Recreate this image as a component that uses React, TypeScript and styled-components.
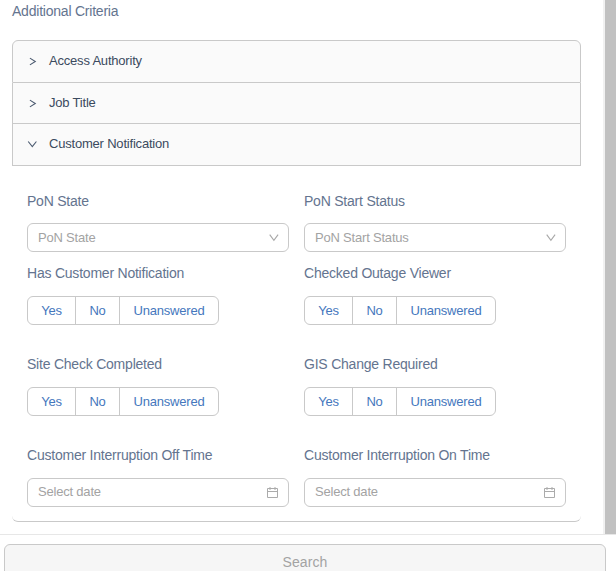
import React from "react";
import styled, { createGlobalStyle } from "styled-components";

const GlobalStyle = createGlobalStyle`
  *, *::before, *::after { box-sizing: border-box; }
  html, body { margin: 0; overflow: hidden; background: #fff; }
  body { font-family: "Liberation Sans", Arial, sans-serif; font-size: 13px; letter-spacing: -0.2px; color: #3b4a5e; }
  button { font-family: inherit; letter-spacing: inherit; }
`;

const Page = styled.div`
  display: flex;
  flex-direction: column;
  width: 616px;
  height: 571px;
  overflow: hidden;
`;

const ScrollRegion = styled.div`
  display: flex;
  height: 534px;
`;

const Content = styled.main`
  width: 603px;
  padding: 1px 22px 0 12px;
`;

const ScrollTrack = styled.div`
  width: 13px;
  padding-left: 2px;
  background: #f1f1f1;
`;

const ScrollThumb = styled.div`
  height: 100%;
  background: #c1c1c1;
`;

const Title = styled.h1`
  margin: 0 0 19px;
  font-size: 14px;
  font-weight: 400;
  line-height: 20px;
  letter-spacing: -0.22px;
  color: #64748f;
`;

const Accordion = styled.div`
  border-radius: 6px;
`;

const SectionHeader = styled.button<{ $height: number; $first?: boolean }>`
  display: flex;
  align-items: center;
  width: 100%;
  height: ${(p) => p.$height}px;
  padding: 0 0 1px 14px;
  gap: 12px;
  border: 1px solid #c9c9c9;
  border-top-width: ${(p) => (p.$first ? 1 : 0)}px;
  border-radius: ${(p) => (p.$first ? "6px 6px 0 0" : "0")};
  background: #fafafa;
  color: #3b4a5e;
  font-size: 13px;
  line-height: 20px;
  text-align: left;
`;

const SectionBody = styled.div`
  height: 350px;
  padding: 25px 15px 0;
`;

const FieldGrid = styled.div`
  display: grid;
  grid-template-columns: 262px 262px;
  grid-template-rows: 72px 91px 91px 77px;
  column-gap: 15px;
`;

const PanelEdge = styled.div`
  height: 6px;
  border-bottom: 1px solid #c9c9c9;
  border-radius: 0 0 6px 6px;
`;

const Label = styled.div<{ $tight?: boolean }>`
  height: 20px;
  margin-bottom: ${(p) => (p.$tight ? 12 : 13)}px;
  font-size: 14px;
  line-height: 20px;
  letter-spacing: -0.22px;
  color: #64748f;
`;

const InputBox = styled.div<{ $date?: boolean }>`
  display: flex;
  align-items: center;
  justify-content: space-between;
  height: 29px;
  padding: 0 ${(p) => (p.$date ? 9 : 8)}px 0 10px;
  border: 1px solid #c9c9c9;
  border-radius: 6px;
  color: #a3a3a3;
`;

const Placeholder = styled.span<{ $date?: boolean }>`
  padding-bottom: ${(p) => (p.$date ? 2 : 0)}px;
`;

const ToggleGroup = styled.div`
  display: flex;
  width: 192px;
  height: 29px;
  border: 1px solid #c9c9c9;
  border-radius: 6px;
`;

const Toggle = styled.button<{ $width: number }>`
  width: ${(p) => p.$width}px;
  padding: 0;
  border: 0;
  border-right: 1px solid #c9c9c9;
  background: transparent;
  color: #4577bd;
  font-size: 13px;
  white-space: nowrap;

  &:last-child { border-right: 0; }
`;

const Footer = styled.footer`
  height: 37px;
  padding: 9px 10px 0 4px;
  border-top: 1px solid #e7e7e7;
`;

const SearchButton = styled.button`
  display: block;
  width: 100%;
  height: 36px;
  padding: 0 0 1px;
  border: 1px solid #c9c9c9;
  border-radius: 6px;
  background: #f6f6f6;
  color: #a3a3a3;
  font-size: 14px;
  letter-spacing: 0.1px;
`;

const Chevron = ({ open }: { open?: boolean }) => (
  <svg width="10" height="10" viewBox="0 0 10 10" fill="none" stroke="#4b5a70" strokeWidth="1.1">
    <path d={open ? "M1.2 2.5L5.3 7.7L9.4 2.5" : "M2.9 2.1L8.3 5.5L2.9 8.9"} />
  </svg>
);

const SelectArrow = () => (
  <svg width="12" height="12" viewBox="0 0 12 12" fill="none" stroke="#a8a8a8" strokeWidth="1.1">
    <path d="M1.7 2.6L5.9 8.4L10.1 2.6" />
  </svg>
);

const CalendarIcon = () => (
  <svg width="13" height="13" viewBox="0 0 13 13" fill="none" stroke="#ababab">
    <path d="M1.5 2.5H11.5V11.5H1.5ZM1.5 5.5H11.5M4 1V4M9 1V4" />
  </svg>
);

type Kind = "select" | "toggle" | "date";

const fields: { label: string; kind: Kind }[] = [
  { label: "PoN State", kind: "select" },
  { label: "PoN Start Status", kind: "select" },
  { label: "Has Customer Notification", kind: "toggle" },
  { label: "Checked Outage Viewer", kind: "toggle" },
  { label: "Site Check Completed", kind: "toggle" },
  { label: "GIS Change Required", kind: "toggle" },
  { label: "Customer Interruption Off Time", kind: "date" },
  { label: "Customer Interruption On Time", kind: "date" },
];

const Control = ({ label, kind }: { label: string; kind: Kind }) => {
  if (kind === "toggle") {
    return (
      <ToggleGroup>
        <Toggle $width={48}>Yes</Toggle>
        <Toggle $width={44}>No</Toggle>
        <Toggle $width={98}>Unanswered</Toggle>
      </ToggleGroup>
    );
  }
  const date = kind === "date";
  return (
    <InputBox $date={date}>
      <Placeholder $date={date}>{date ? "Select date" : label}</Placeholder>
      {date ? <CalendarIcon /> : <SelectArrow />}
    </InputBox>
  );
};

export default function App() {
  return (
    <>
      <GlobalStyle />
      <Page>
        <ScrollRegion>
          <Content>
            <Title>Additional Criteria</Title>
            <Accordion>
              <SectionHeader $height={43} $first>
                <Chevron />
                Access Authority
              </SectionHeader>
              <SectionHeader $height={41}>
                <Chevron />
                Job Title
              </SectionHeader>
              <SectionHeader $height={42}>
                <Chevron open />
                Customer Notification
              </SectionHeader>
              <SectionBody>
                <FieldGrid>
                  {fields.map((f) => (
                    <div key={f.label}>
                      <Label $tight={f.kind === "select"}>{f.label}</Label>
                      <Control {...f} />
                    </div>
                  ))}
                </FieldGrid>
              </SectionBody>
              <PanelEdge />
            </Accordion>
          </Content>
          <ScrollTrack>
            <ScrollThumb />
          </ScrollTrack>
        </ScrollRegion>
        <Footer>
          <SearchButton>Search</SearchButton>
        </Footer>
      </Page>
    </>
  );
}
